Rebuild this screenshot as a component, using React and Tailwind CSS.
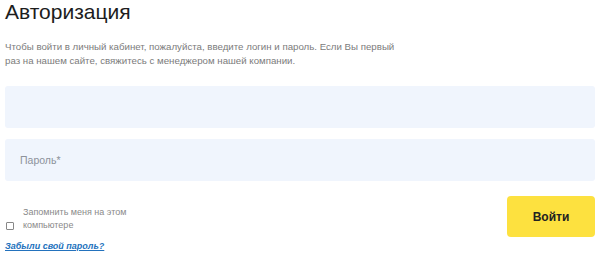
import React, { useState } from 'react';

const LoginForm = () => {
  const [login, setLogin] = useState('');
  const [password, setPassword] = useState('');
  const [remember, setRemember] = useState(false);

  return (
    <div className="bg-white min-h-screen px-[5px] font-['Liberation_Sans',Arial,sans-serif]">
      <h1 className="text-[21px] leading-[24px] text-[#1d1d1d] pt-0">Авторизация</h1>
      <p className="mt-[16px] text-[9.7px] leading-[14px] text-[#7b7b7b] whitespace-nowrap">
        Чтобы войти в личный кабинет, пожалуйста, введите логин и пароль. Если Вы первый
        <br />
        раз на нашем сайте, свяжитесь с менеджером нашей компании.
      </p>

      <div className="mt-[18px] flex flex-col gap-[11px]">
        <input
          type="text"
          value={login}
          onChange={(e) => setLogin(e.target.value)}
          className="w-full h-[42px] bg-[#f0f5fd] rounded-[3px] px-[15px] text-[11px] outline-none"
        />
        <input
          type="password"
          value={password}
          onChange={(e) => setPassword(e.target.value)}
          placeholder="Пароль*"
          className="w-full h-[42px] bg-[#f0f5fd] rounded-[3px] px-[15px] text-[10.5px] text-[#333] placeholder:text-[#8d929b] outline-none"
        />
      </div>

      <div className="mt-[15px] flex justify-between items-start">
        <div className="pt-[10px]">
          <label className="flex items-end gap-[9px] cursor-pointer">
            <input
              type="checkbox"
              checked={remember}
              onChange={(e) => setRemember(e.target.checked)}
              className="w-[8px] h-[8px] mb-[2px] ml-[1px] border border-[#888] rounded-[1px] appearance-none bg-white"
            />
            <span className="w-[108px] text-[9px] leading-[13px] text-[#8a8a8a]">
              Запомнить меня на этом компьютере
            </span>
          </label>
          <a href="#" className="block mt-[8px] text-[9px] italic font-semibold underline text-[#2372bd]">
            Забыли свой пароль?
          </a>
        </div>
        <button className="w-[88px] h-[41px] bg-[#fde13f] rounded-[4px] text-[12px] font-bold text-[#222]">
          Войти
        </button>
      </div>
    </div>
  );
};

export default function App() {
  return <LoginForm />;
}
